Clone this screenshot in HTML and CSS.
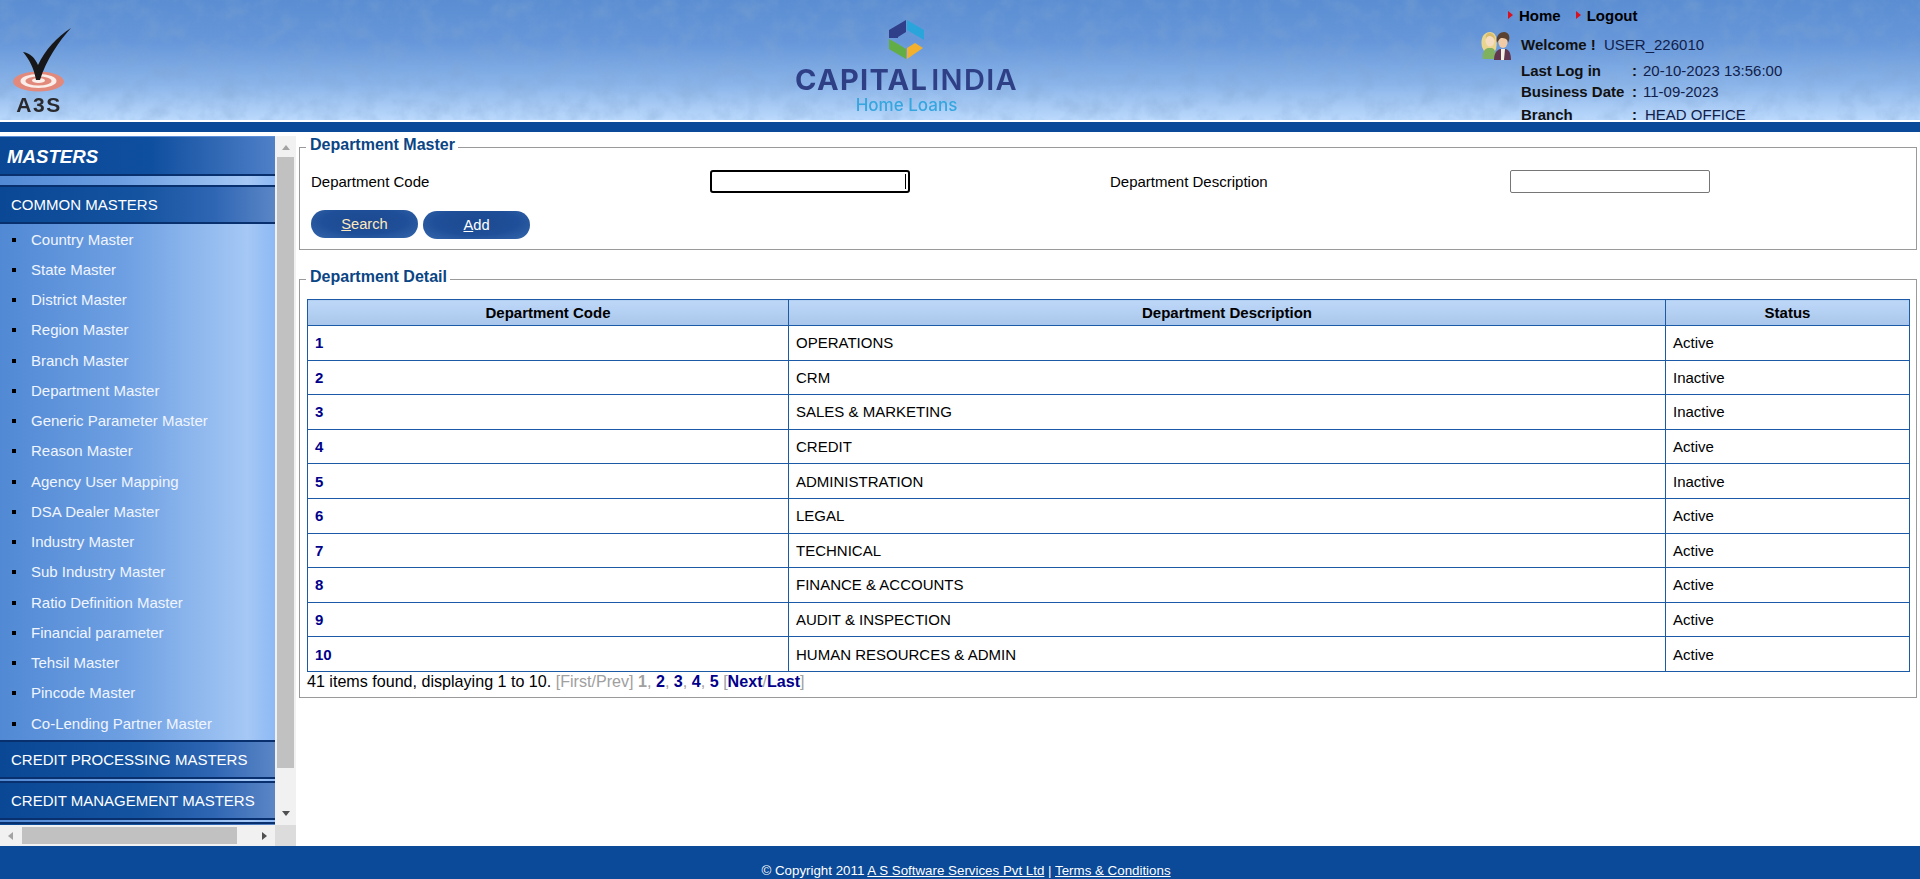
FILE: index.html
```html
<!DOCTYPE html>
<html lang="en">
<head>
    <meta charset="UTF-8">
    <meta name="viewport" content="width=device-width, initial-scale=1.0">
    <title>Department Master</title>
    <link rel="stylesheet" href="styles.css">
</head>
<body>
    <header class="top-header">
        <svg class="header-texture" width="100%" height="120" aria-hidden="true">
            <filter id="marble">
                <feTurbulence type="fractalNoise" baseFrequency="0.05" numOctaves="4" seed="11"/>
                <feColorMatrix type="matrix" values="0 0 0 0 0.22  0 0 0 0 0.38  0 0 0 0 0.64  1.8 0 0 0 -0.72"/>
            </filter>
            <rect width="100%" height="120" filter="url(#marble)"/>
        </svg>

        <div class="a3s-logo">
            <svg width="60" height="64" viewBox="0 0 60 64">
                <ellipse cx="25.5" cy="53.5" rx="25.5" ry="10" fill="#e2897c"/>
                <ellipse cx="25.5" cy="53" rx="18" ry="7" fill="#fbeeea"/>
                <ellipse cx="25.5" cy="53" rx="13" ry="4.6" fill="#e2897c"/>
                <ellipse cx="25.5" cy="52.5" rx="6.5" ry="2.4" fill="#fbeeea"/>
                <path d="M10 24 C17 25 22 30 25 37 C32 22 44 9 58 0 C46 13 33 32 27 52 L23 52 C21 40 16 31 10 24 Z" fill="#17171a"/>
            </svg>
            <span class="a3s-text">A3S</span>
        </div>

        <div class="capital-logo">
            <svg width="36" height="40" viewBox="0 0 36 40">
                <polygon points="0,11 17,1 17,13 9,18 9,19 0,19" fill="#303f8a"/>
                <polygon points="18,1 35,11 35,21 18,11" fill="#29a5dc"/>
                <polygon points="0,20 9,25 17,30 17,40 0,30" fill="#62ad45"/>
                <polygon points="18,29 26,24 34,29 18,40" fill="#f2b02d"/>
            </svg>
            <div class="capital-name">CAPITAL<span class="capital-gap">INDIA</span></div>
            <div class="capital-sub">Home Loans</div>
        </div>

        <div class="user-panel">
            <ul class="user-links">
                <li><a href="#">Home</a></li>
                <li><a href="#">Logout</a></li>
            </ul>
            <div class="user-info">
                <svg class="user-icon" width="30" height="28" viewBox="0 0 30 28">
                    <path d="M1 15 C-1 6 3 0 9 0 C15 0 17 7 15 17 L13 21 L4 21 Z" fill="#e9d58e"/>
                    <ellipse cx="9" cy="9" rx="4.5" ry="5.5" fill="#f6dcc0"/>
                    <path d="M5 7 C6 3 11 3 14 8 C14 3 11 1 9 1 C6 1 4 3 5 7 Z" fill="#d9bd6c"/>
                    <path d="M2 27 C1 21 3 17 7 16 L11 16 C14 17 15 21 15 27 Z" fill="#7fb15e"/>
                    <path d="M13 28 C13 21 16 18 19 17 L25 17 C28 18 30 21 30 28 Z" fill="#63364f"/>
                    <path d="M20 17 L24 17 L23 28 L20 28 Z" fill="#f3f0e4"/>
                    <ellipse cx="22" cy="10" rx="4.6" ry="6" fill="#f0cba6"/>
                    <path d="M16 11 C14 3 20 0 23 0 C28 0 30 5 27 11 C27 7 24 6 20 6 C18 7 17 9 16 11 Z" fill="#5b4230"/>
                </svg>
                <dl class="user-grid">
                    <dt>Welcome !</dt>
                    <dd class="welcome-name">USER_226010</dd>
                    <dt>Last Log in</dt>
                    <dd><b>:</b>20-10-2023 13:56:00</dd>
                    <dt>Business Date</dt>
                    <dd><b>:</b>11-09-2023</dd>
                    <dt>Branch</dt>
                    <dd><b>:</b><span class="branch-name">HEAD OFFICE</span></dd>
                </dl>
            </div>
        </div>
    </header>

    <div class="header-bar"></div>

    <div class="page-body">
        <aside class="side-panel">
            <div class="side-content">
                <h2 class="side-title">MASTERS</h2>
                <h3 class="side-group side-group-first">COMMON MASTERS</h3>
                <ul class="side-list">
                    <li><a href="#">Country Master</a></li>
                    <li><a href="#">State Master</a></li>
                    <li><a href="#">District Master</a></li>
                    <li><a href="#">Region Master</a></li>
                    <li><a href="#">Branch Master</a></li>
                    <li><a href="#">Department Master</a></li>
                    <li><a href="#">Generic Parameter Master</a></li>
                    <li><a href="#">Reason Master</a></li>
                    <li><a href="#">Agency User Mapping</a></li>
                    <li><a href="#">DSA Dealer Master</a></li>
                    <li><a href="#">Industry Master</a></li>
                    <li><a href="#">Sub Industry Master</a></li>
                    <li><a href="#">Ratio Definition Master</a></li>
                    <li><a href="#">Financial parameter</a></li>
                    <li><a href="#">Tehsil Master</a></li>
                    <li><a href="#">Pincode Master</a></li>
                    <li><a href="#">Co-Lending Partner Master</a></li>
                </ul>
                <h3 class="side-group">CREDIT PROCESSING MASTERS</h3>
                <h3 class="side-group">CREDIT MANAGEMENT MASTERS</h3>
                <h3 class="side-group"></h3>
            </div>
            <div class="scroll-v">
                <span class="arrow arrow-up"></span>
                <span class="scroll-v-track"><span class="scroll-v-thumb"></span></span>
                <span class="arrow arrow-down"></span>
            </div>
            <div class="scroll-h">
                <span class="arrow arrow-left"></span>
                <span class="scroll-h-track"><span class="scroll-h-thumb"></span></span>
                <span class="arrow arrow-right"></span>
            </div>
            <div class="scroll-corner"></div>
        </aside>

        <main class="main-area">
            <fieldset class="box box-search">
                <legend>Department Master</legend>
                <div class="search-grid">
                    <label for="deptCode">Department Code</label>
                    <span class="focus-wrap"><input type="text" id="deptCode" class="text-input text-input-focus"></span>
                    <label for="deptDesc">Department Description</label>
                    <input type="text" id="deptDesc" class="text-input">
                </div>
                <div class="button-row">
                    <a href="#" class="pill-button pill-search"><u>S</u>earch</a>
                    <a href="#" class="pill-button pill-add"><u>A</u>dd</a>
                </div>
            </fieldset>

            <fieldset class="box box-detail">
                <legend>Department Detail</legend>
                <table class="dept-table">
                    <colgroup>
                        <col class="col-code">
                        <col class="col-desc">
                        <col class="col-status">
                    </colgroup>
                    <thead>
                        <tr><th>Department Code</th><th>Department Description</th><th>Status</th></tr>
                    </thead>
                    <tbody>
                        <tr><td><a href="#">1</a></td><td>OPERATIONS</td><td>Active</td></tr>
                        <tr><td><a href="#">2</a></td><td>CRM</td><td>Inactive</td></tr>
                        <tr><td><a href="#">3</a></td><td>SALES &amp; MARKETING</td><td>Inactive</td></tr>
                        <tr><td><a href="#">4</a></td><td>CREDIT</td><td>Active</td></tr>
                        <tr><td><a href="#">5</a></td><td>ADMINISTRATION</td><td>Inactive</td></tr>
                        <tr><td><a href="#">6</a></td><td>LEGAL</td><td>Active</td></tr>
                        <tr><td><a href="#">7</a></td><td>TECHNICAL</td><td>Active</td></tr>
                        <tr><td><a href="#">8</a></td><td>FINANCE &amp; ACCOUNTS</td><td>Active</td></tr>
                        <tr><td><a href="#">9</a></td><td>AUDIT &amp; INSPECTION</td><td>Active</td></tr>
                        <tr><td><a href="#">10</a></td><td>HUMAN RESOURCES &amp; ADMIN</td><td>Active</td></tr>
                    </tbody>
                </table>
                <div class="pager">
                    41 items found, displaying 1 to 10.
                    <span class="pager-off">[First/Prev]</span>
                    <b class="pager-off">1</b><span class="pager-off">,</span>
                    <a href="#">2</a><span class="pager-off">,</span>
                    <a href="#">3</a><span class="pager-off">,</span>
                    <a href="#">4</a><span class="pager-off">,</span>
                    <a href="#">5</a>
                    <span class="pager-off">[</span><a href="#">Next</a><span class="pager-off">/</span><a href="#">Last</a><span class="pager-off">]</span>
                </div>
            </fieldset>
        </main>
    </div>

    <footer class="page-footer">
        &copy; Copyright 2011 <a href="#">A S Software Services Pvt Ltd</a> | <a href="#">Terms &amp; Conditions</a>
    </footer>
</body>
</html>
```

FILE: styles.css
```css
html, body {
    height: 100%;
}

body {
    margin: 0;
    padding: 0;
    font-family: "Liberation Sans", Arial, sans-serif;
    font-size: 15px;
    color: #000;
    background-color: #fff;
    display: flex;
    flex-direction: column;
    overflow: hidden;
}

a {
    color: inherit;
}

/* Header */
.top-header {
    position: relative;
    height: 120px;
    flex: none;
    display: flex;
    overflow: hidden;
    background: linear-gradient(to bottom, #5a8dd2 0%, #6797da 35%, #8ab4e9 70%, #bbd9fc 100%);
}

.header-texture {
    position: absolute;
    top: 0;
    left: 0;
    opacity: 0.42;
}

.a3s-logo {
    position: relative;
    width: 250px;
    margin-left: 13px;
    padding-top: 28px;
    filter: blur(0.3px);
}

.a3s-logo svg {
    display: block;
    margin-bottom: 4px;
}

.a3s-text {
    display: block;
    width: 52px;
    text-align: center;
    font-size: 21px;
    font-weight: bold;
    line-height: 18px;
    letter-spacing: 1.6px;
    color: #2a2a2e;
}

.capital-logo {
    position: relative;
    width: 223px;
    margin-left: 532px;
    padding-top: 19px;
    text-align: center;
    filter: blur(0.4px);
}

.capital-logo svg {
    display: block;
    margin: 0 auto;
}

.capital-name {
    margin-top: 6px;
    font-family: Inter, "Liberation Sans", sans-serif;
    font-size: 29px;
    font-weight: 700;
    line-height: 30px;
    letter-spacing: 1.3px;
    white-space: nowrap;
    color: #2f3f86;
}

.capital-gap {
    margin-left: 3px;
    font-weight: 600;
}

.capital-sub {
    margin-top: 1px;
    font-family: Inter, "Liberation Sans", sans-serif;
    font-size: 17px;
    font-weight: 500;
    line-height: 18px;
    color: #35a6de;
}

.user-panel {
    position: relative;
    margin-left: 463px;
    width: 420px;
}

.user-links {
    list-style: none;
    margin: 7px 0 0 27px;
    padding: 0;
    display: flex;
    height: 17px;
    gap: 15px;
}

.user-links li {
    padding-left: 11px;
    position: relative;
}

.user-links li::before {
    content: "";
    position: absolute;
    left: 0;
    top: 4px;
    border-left: 5px solid #d8121e;
    border-top: 4px solid transparent;
    border-bottom: 4px solid transparent;
}

.user-links a {
    font-weight: bold;
    text-decoration: none;
    color: #000;
}

.user-info {
    display: flex;
    margin-top: 8px;
}

.user-icon {
    flex: none;
    margin-right: 10px;
}

.user-grid {
    margin: 4px 0 0;
    display: grid;
    grid-template-columns: 111px auto;
    grid-template-rows: 26px 21px 23px 21px;
    line-height: 18px;
}

.user-grid dt {
    font-weight: bold;
    color: #111;
}

.user-grid dd {
    margin: 0;
    color: #10204a;
    white-space: nowrap;
}

.user-grid dd b {
    margin-right: 6px;
    color: #111;
}

.user-grid .welcome-name {
    margin-left: -28px;
}

.branch-name {
    margin-left: 2px;
}

.header-bar {
    flex: none;
    height: 10px;
    margin-top: 2px;
    margin-bottom: 4px;
    background-color: #0a4a99;
}

/* Body */
.page-body {
    flex: 1;
    display: flex;
    min-height: 0;
}

.side-panel {
    flex: none;
    width: 296px;
    display: grid;
    grid-template-columns: 275px 21px;
    grid-template-rows: 689px 21px;
}

.side-content {
    overflow: hidden;
    background: linear-gradient(to right, #5189d4 0%, #6d9fe2 45%, #a5c8f5 90%, #8db9f5 100%);
}

.side-title {
    margin: 0;
    height: 37px;
    padding-left: 7px;
    border-top: 1px solid #5d8fd8;
    border-bottom: 2px solid #08306e;
    font-size: 18.67px;
    font-style: italic;
    font-weight: bold;
    line-height: 39px;
    color: #fff;
    background: linear-gradient(to right, #0a4795 0%, #0f4f9f 55%, #3a6fba 85%, #4f80c8 100%);
}

.side-group {
    margin: 2px 0 0;
    height: 35px;
    padding-left: 11px;
    border-top: 2px solid #08306e;
    border-bottom: 2px solid #08306e;
    font-size: 15px;
    font-weight: normal;
    line-height: 35px;
    color: #fff;
    white-space: nowrap;
    background: linear-gradient(to right, #0a4795 0%, #14539f 50%, #2f66b4 78%, #5b86c6 100%);
}

.side-group-first {
    margin-top: 9px;
}

.side-list {
    list-style: none;
    margin: 0;
    padding: 0;
}

.side-list li {
    display: flex;
    align-items: center;
    height: 30.25px;
}

.side-list li::before {
    content: "";
    width: 4px;
    height: 4px;
    margin: 1px 15px 0 12px;
    background-color: #000;
}

.side-list a {
    color: #f0f5ff;
    text-decoration: none;
}

.scroll-v {
    display: flex;
    flex-direction: column;
    align-items: center;
    background-color: #f1f1f1;
}

.scroll-v-track {
    flex: 1;
    width: 17px;
}

.scroll-v-thumb {
    display: block;
    width: 17px;
    height: 611px;
    background-color: #c1c1c1;
}

.scroll-h {
    display: flex;
    align-items: center;
    background-color: #f1f1f1;
}

.scroll-h-track {
    flex: 1;
    height: 17px;
}

.scroll-h-thumb {
    display: block;
    width: 215px;
    height: 17px;
    background-color: #c1c1c1;
}

.scroll-corner {
    background-color: #dcdcdc;
}

.arrow {
    flex: none;
    display: block;
    width: 0;
    height: 0;
}

.arrow-up {
    margin: 9px 0 7px;
    border-left: 4px solid transparent;
    border-right: 4px solid transparent;
    border-bottom: 5px solid #a3a3a3;
}

.arrow-down {
    margin: 8px 0 9px;
    border-left: 4px solid transparent;
    border-right: 4px solid transparent;
    border-top: 5px solid #505050;
}

.arrow-left {
    margin: 0 9px 0 8px;
    border-top: 4px solid transparent;
    border-bottom: 4px solid transparent;
    border-right: 5px solid #a3a3a3;
}

.arrow-right {
    margin: 0 8px 0 9px;
    border-top: 4px solid transparent;
    border-bottom: 4px solid transparent;
    border-left: 5px solid #505050;
}

/* Main */
.main-area {
    flex: 1;
    min-width: 0;
    padding: 0 3px;
}

.box {
    margin: 0;
    padding: 0;
    box-sizing: border-box;
    border: 1px solid #9a9a9a;
    min-width: 0;
}

.box legend {
    margin-left: 6px;
    padding: 0 3px 4px 4px;
    font-size: 16px;
    font-weight: bold;
    line-height: 18px;
    color: #0a4585;
}

.box-search {
    height: 114px;
}

.box-detail {
    margin-top: 18px;
    padding: 9px 8px 0 7px;
    height: 430px;
}

.box-detail legend {
    margin-left: -1px;
}

.search-grid {
    display: grid;
    grid-template-columns: 399px 400px 400px 400px;
    align-items: center;
    height: 23px;
    margin: 12px 0 0 11px;
}

.focus-wrap {
    position: relative;
    display: block;
    width: 200px;
    height: 23px;
}

.focus-wrap::after {
    content: "";
    position: absolute;
    top: 4px;
    right: 4px;
    width: 1px;
    height: 15px;
    background-color: #000;
}

.text-input {
    display: block;
    box-sizing: border-box;
    width: 200px;
    height: 23px;
    padding: 1px 2px;
    border: 1px solid #767676;
    border-radius: 2px;
    background-color: #fff;
}

.text-input-focus {
    border: 2px solid #000;
    border-radius: 3px;
}

.button-row {
    display: flex;
    align-items: flex-start;
    gap: 5px;
    margin: 17px 0 0 11px;
}

.pill-button {
    display: block;
    width: 107px;
    height: 28px;
    border-radius: 14px;
    font-size: 14.67px;
    line-height: 28px;
    text-align: center;
    text-decoration: none;
    background: radial-gradient(ellipse at 50% 40%, #1c4a92 0%, #1f4f98 55%, #3668ad 100%);
}

.pill-search {
    color: #ffe9bd;
}

.pill-add {
    margin-top: 1px;
    color: #fff;
}

.dept-table {
    width: 1602px;
    border-collapse: collapse;
    table-layout: fixed;
}

.col-code {
    width: 481px;
}

.col-desc {
    width: 877px;
}

.col-status {
    width: 244px;
}

.dept-table th, .dept-table td {
    border: 1px solid #1c5aa8;
    padding: 0 7px;
}

.dept-table th {
    height: 25px;
    font-weight: bold;
    background: linear-gradient(to bottom, #bdd7f8 0%, #a9c7eb 100%);
}

.dept-table td {
    height: 33.6px;
}

.dept-table td a {
    font-weight: bold;
    text-decoration: none;
    color: #00008b;
}

.pager {
    font-size: 16.1px;
    line-height: 18px;
}

.pager a {
    font-weight: bold;
    text-decoration: none;
    color: #00008b;
}

.pager-off {
    color: #a0a0a0;
}

/* Footer */
.page-footer {
    flex: none;
    height: 33px;
    box-sizing: border-box;
    padding: 16px 0 0 12px;
    font-size: 13.33px;
    line-height: 17px;
    text-align: center;
    color: #fff;
    background-color: #0a4a99;
}
```
